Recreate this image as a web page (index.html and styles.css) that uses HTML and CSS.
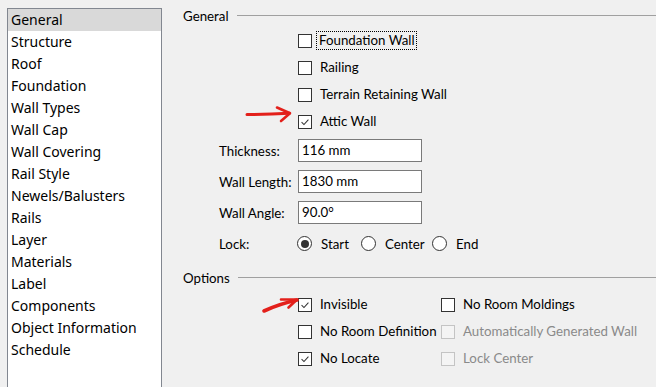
FILE: index.html
```html
<!DOCTYPE html>
<html>
<head>
<meta charset="utf-8">
<link rel="stylesheet" href="styles.css">
</head>
<body>
<div class="window">
  <aside class="list">
    <div class="item sel">General</div>
    <div class="item">Structure</div>
    <div class="item">Roof</div>
    <div class="item">Foundation</div>
    <div class="item">Wall Types</div>
    <div class="item">Wall Cap</div>
    <div class="item">Wall Covering</div>
    <div class="item">Rail Style</div>
    <div class="item">Newels/Balusters</div>
    <div class="item">Rails</div>
    <div class="item">Layer</div>
    <div class="item">Materials</div>
    <div class="item">Label</div>
    <div class="item">Components</div>
    <div class="item">Object Information</div>
    <div class="item">Schedule</div>
  </aside>
  <main class="main">
    <div class="group-head"><span class="ghead">General</span><span class="rule"></span></div>
    <div class="checks">
      <div class="chk"><span class="box"></span><span class="txt focus">Foundation Wall</span></div>
      <div class="chk"><span class="box"></span><span class="txt">Railing</span></div>
      <div class="chk"><span class="box"></span><span class="txt">Terrain Retaining Wall</span></div>
      <div class="chk"><span class="box"><svg viewBox="0 0 14 14" class="tick"><path d="M3 7.2 L5.8 10 L11 4.2"/></svg></span><span class="txt">Attic Wall</span></div>
    </div>
    <div class="fields">
      <span class="flabel">Thickness:</span><div class="input">116 mm</div>
      <span class="flabel">Wall Length:</span><div class="input">1830 mm</div>
      <span class="flabel">Wall Angle:</span><div class="input">90.0°</div>
      <span class="flabel">Lock:</span>
      <div class="radios">
        <div class="radio r-start"><span class="circle on"></span><span>Start</span></div>
        <div class="radio r-center"><span class="circle"></span><span>Center</span></div>
        <div class="radio"><span class="circle"></span><span>End</span></div>
      </div>
    </div>
    <div class="group-head options"><span class="ghead">Options</span><span class="rule"></span></div>
    <div class="opts">
      <div class="chk"><span class="box"><svg viewBox="0 0 14 14" class="tick"><path d="M3 7.2 L5.8 10 L11 4.2"/></svg></span><span class="txt">Invisible</span></div>
      <div class="chk"><span class="box"></span><span class="txt">No Room Moldings</span></div>
      <div class="chk"><span class="box"></span><span class="txt">No Room Definition</span></div>
      <div class="chk disabled"><span class="box"></span><span class="txt">Automatically Generated Wall</span></div>
      <div class="chk"><span class="box"><svg viewBox="0 0 14 14" class="tick"><path d="M3 7.2 L5.8 10 L11 4.2"/></svg></span><span class="txt">No Locate</span></div>
      <div class="chk disabled"><span class="box"></span><span class="txt">Lock Center</span></div>
    </div>
  </main>
  <svg class="arrows" viewBox="0 0 656 387" width="656" height="387">
    <g fill="none" stroke="#e3201b" stroke-linecap="round" stroke-linejoin="round">
      <path d="M247 114.5 Q268 114.5 289.5 113.3" stroke-width="3"/>
      <path d="M277 107.5 L290 113.3 L281 121" stroke-width="2.6"/>
      <path d="M264 311 Q279 304 297 300" stroke-width="3.6"/>
      <path d="M281 299.5 L297 299.5 L288.5 307.5" stroke-width="2.6"/>
    </g>
  </svg>
</div>
</body>
</html>
```
FILE: styles.css
```css
html, body {
  margin: 0;
  padding: 0;
  background: #f0f0f0;
}
body {
  font-family: "Noto Sans", "Open Sans", sans-serif;
  font-size: 14px;
  color: #000;
  overflow: hidden;
}
.window {
  position: relative;
  display: flex;
  width: 656px;
  height: 387px;
  overflow: hidden;
}
.list {
  box-sizing: border-box;
  margin: 8px 0 0 7px;
  width: 155px;
  height: 400px;
  flex: none;
  background: #fff;
  border: 1px solid #828790;
}
.item {
  height: 22px;
  line-height: 22px;
  padding-left: 3px;
  white-space: nowrap;
}
.item.sel {
  background: #d9d9d9;
}
.main {
  flex: 1;
  margin-left: 8px;
  display: flex;
  flex-direction: column;
  font-family: "Lato", "Noto Sans", sans-serif;
  font-size: 13.3px;
}
.group-head {
  margin-top: 6px;
  height: 20px;
  display: flex;
  align-items: center;
  padding-left: 13px;
}
.group-head.options {
  margin-top: 13px;
}
.ghead {
  white-space: nowrap;
}
.rule {
  flex: 1;
  height: 0;
  margin-left: 8px;
  margin-top: -1px;
  border-top: 1px solid #a0a0a0;
}
.checks {
  margin-top: 1px;
  padding-left: 128px;
  display: flex;
  flex-direction: column;
}
.chk {
  height: 27px;
  display: flex;
  align-items: center;
  white-space: nowrap;
}
.box {
  box-sizing: border-box;
  width: 14px;
  height: 14px;
  border: 1px solid #333;
  background: #fff;
  flex: none;
  display: flex;
}
.tick {
  width: 12px;
  height: 12px;
}
.tick path {
  fill: none;
  stroke: #333;
  stroke-width: 1.2;
}
.txt {
  margin-left: 6px;
  padding: 0 1px;
  line-height: 17px;
  border: 1px solid transparent;
}
.txt.focus {
  margin-left: 4px;
  padding: 0 1px 0 2px;
  border: 1px dotted #000;
}
.chk.disabled .box {
  border-color: #c4c4c4;
  background: #f4f4f4;
}
.chk.disabled .txt {
  color: #8a8a8a;
}
.fields {
  margin-top: 4px;
  padding-left: 49px;
  display: grid;
  grid-template-columns: 79px 124px;
  grid-auto-rows: 23px;
  row-gap: 8px;
  align-items: center;
}
.flabel {
  white-space: nowrap;
}
.input {
  box-sizing: border-box;
  height: 23px;
  border: 1px solid #7a7a7a;
  background: #fff;
  padding-left: 3px;
  line-height: 21px;
}
.radios {
  display: flex;
  align-items: center;
  white-space: nowrap;
  margin-left: -1px;
}
.radio {
  display: flex;
  align-items: center;
  flex: none;
}
.r-start { width: 64px; }
.r-center { width: 71px; }
.circle {
  box-sizing: border-box;
  width: 15px;
  height: 15px;
  border: 1px solid #333;
  border-radius: 50%;
  background: #fff;
  margin-right: 9px;
  display: flex;
  align-items: center;
  justify-content: center;
  flex: none;
}
.circle.on::after {
  content: "";
  width: 8px;
  height: 8px;
  border-radius: 50%;
  background: #333;
}
.opts {
  margin-top: 3px;
  padding-left: 128px;
  display: grid;
  grid-template-columns: 143px auto;
  grid-auto-rows: 27px;
}
.arrows {
  position: absolute;
  left: 0;
  top: 0;
  pointer-events: none;
}
```
